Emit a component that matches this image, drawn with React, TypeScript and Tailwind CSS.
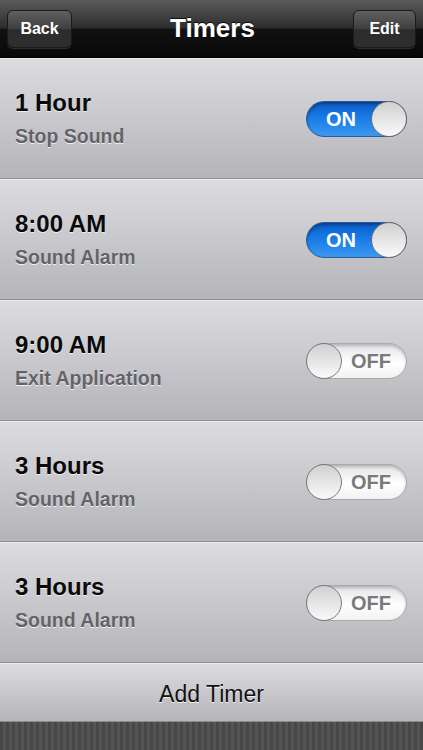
import React from "react";

const rows = [
  { t: "1 Hour", s: "Stop Sound", on: true },
  { t: "8:00 AM", s: "Sound Alarm", on: true },
  { t: "9:00 AM", s: "Exit Application", on: false },
  { t: "3 Hours", s: "Sound Alarm", on: false },
  { t: "3 Hours", s: "Sound Alarm", on: false },
];

function Toggle({ on }: { on: boolean }) {
  if (on) {
    return (
      <div className="relative w-[101px] h-[36px] rounded-full border border-[#2a5a9a] bg-[linear-gradient(#0a5cc8,#1a7ee8_50%,#3c98f0)] shadow-[inset_0_2px_3px_rgba(0,0,0,0.35)] flex items-center">
        <span className="ml-[19px] text-white text-[20px] font-bold">ON</span>
        <div className="absolute right-[-1px] top-[-1px] w-[36px] h-[36px] rounded-full border border-[#6d6d6d] bg-[linear-gradient(#d0d0d0,#fafafa)]" />
      </div>
    );
  }
  return (
    <div className="relative w-[101px] h-[36px] rounded-full border border-[#a9a9a9] bg-[linear-gradient(#e2e2e2,#ffffff_55%,#f2f2f2)] shadow-[inset_0_2px_3px_rgba(0,0,0,0.2)] flex items-center">
      <span className="ml-[44px] text-[#7a7a7a] text-[20px] font-bold">OFF</span>
      <div className="absolute left-[-1px] top-[-1px] w-[36px] h-[36px] rounded-full border border-[#7a7a7a] bg-[linear-gradient(#d0d0d0,#fafafa)]" />
    </div>
  );
}

export default function App() {
  const font = { fontFamily: "'Liberation Sans', Arial, sans-serif" };
  return (
    <div className="w-[423px] h-[750px] overflow-hidden flex flex-col bg-[#4b4b4b]" style={font}>
      <div className="h-[58px] flex items-center justify-between px-[7px] bg-[linear-gradient(#5a5a5a,#2e2e2e_48%,#111111_52%,#080808)] border-b border-[#000]">
        <div className="w-[65px] h-[38px] rounded-[6px] border border-[#1a1a1a] bg-[linear-gradient(#606060,#3e3e3e_50%,#2c2c2c_52%,#2e2e2e)] flex items-center justify-center text-white text-[16px] font-bold shadow-[0_1px_0_rgba(255,255,255,0.15)]">
          Back
        </div>
        <div className="text-white text-[26px] font-bold [text-shadow:0_-1px_0_rgba(0,0,0,0.8)]">Timers</div>
        <div className="w-[63px] h-[38px] rounded-[6px] border border-[#1a1a1a] bg-[linear-gradient(#606060,#3e3e3e_50%,#2c2c2c_52%,#2e2e2e)] flex items-center justify-center text-white text-[16px] font-bold shadow-[0_1px_0_rgba(255,255,255,0.15)]">
          Edit
        </div>
      </div>
      {rows.map((r, i) => (
        <div
          key={i}
          className="h-[121px] shrink-0 flex items-center justify-between pl-[15px] pr-[16px] bg-[linear-gradient(#dcdce0,#b4b4b9)] border-t border-[#ececef] border-b border-b-[#8e8e93]"
        >
          <div className="flex flex-col pb-[2px]">
            <div className="text-[24px] font-bold text-[#0a0a0a] leading-[28px] [text-shadow:0_1px_0_rgba(255,255,255,0.7)]">{r.t}</div>
            <div className="mt-[8px] text-[19.5px] font-bold text-[#636367] leading-[22px] [text-shadow:0_1px_0_rgba(255,255,255,0.8)]">{r.s}</div>
          </div>
          <Toggle on={r.on} />
        </div>
      ))}
      <div className="h-[59px] shrink-0 flex items-center justify-center pt-[4px] bg-[linear-gradient(#dcdce0,#b4b4b9)] border-t border-[#ececef] border-b border-b-[#8e8e93]">
        <span className="text-[23px] text-[#111] [text-shadow:0_1px_0_rgba(255,255,255,0.8)]">Add Timer</span>
      </div>
      <div className="flex-1 bg-[repeating-linear-gradient(90deg,#484848_0px,#484848_3px,#545454_3px,#545454_6px)]" />
    </div>
  );
}
